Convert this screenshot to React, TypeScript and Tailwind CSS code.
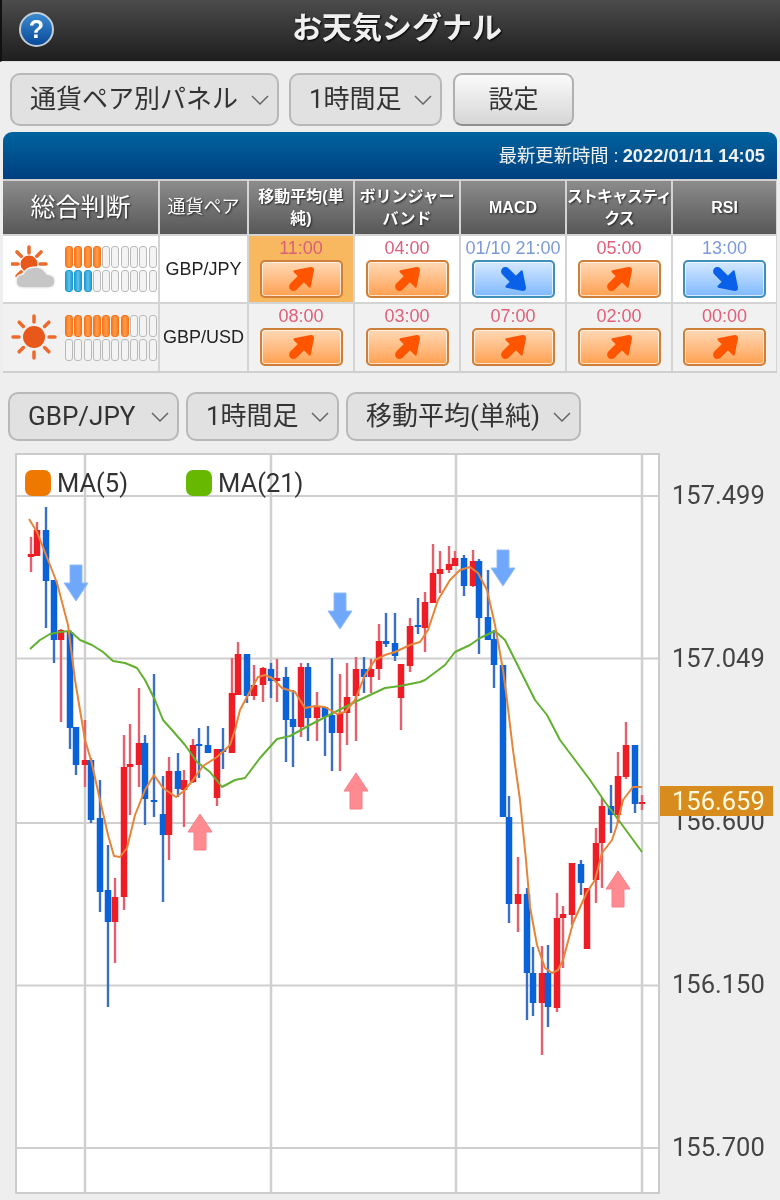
const candles: [number, number, number, number, number, "r" | "b"][] = [
  [31, 537, 572, 554, 557, "r"], [37, 522, 556, 530, 556, "r"], [46, 507, 628, 530, 581, "b"],
  [54, 580, 663, 580, 640, "b"], [61, 629, 722, 630, 640, "r"], [70, 630, 749, 632, 728, "b"],
  [76, 727, 775, 727, 765, "b"], [85, 720, 787, 760, 765, "r"], [91, 758, 823, 760, 820, "b"],
  [100, 780, 912, 818, 892, "b"], [108, 845, 1007, 890, 922, "b"], [115, 878, 963, 897, 922, "r"],
  [124, 735, 910, 767, 897, "r"], [130, 724, 815, 764, 767, "r"], [139, 688, 787, 743, 765, "r"],
  [145, 735, 825, 743, 799, "b"], [154, 674, 817, 800, 802, "b"], [163, 776, 902, 814, 835, "b"],
  [169, 757, 860, 771, 835, "r"], [178, 753, 797, 771, 789, "b"], [184, 770, 827, 780, 790, "r"],
  [193, 739, 783, 745, 782, "r"], [199, 728, 778, 744, 746, "b"], [208, 726, 753, 745, 753, "b"],
  [217, 749, 806, 749, 798, "r"], [223, 728, 769, 749, 752, "b"], [232, 658, 753, 693, 753, "r"],
  [238, 642, 695, 654, 695, "r"], [247, 654, 703, 654, 696, "b"], [254, 665, 700, 685, 696, "r"],
  [263, 667, 702, 668, 685, "r"], [271, 663, 698, 669, 681, "b"], [277, 659, 702, 678, 681, "r"],
  [286, 667, 762, 677, 720, "b"], [293, 690, 767, 719, 727, "b"], [301, 663, 737, 667, 727, "r"],
  [308, 663, 741, 667, 718, "b"], [317, 692, 741, 707, 718, "r"], [325, 707, 756, 707, 717, "b"],
  [332, 658, 771, 715, 733, "b"], [340, 674, 771, 713, 733, "r"], [347, 663, 745, 697, 713, "r"],
  [356, 657, 741, 669, 696, "r"], [364, 657, 693, 669, 677, "b"], [371, 659, 693, 669, 677, "r"],
  [379, 624, 680, 641, 669, "r"], [386, 613, 647, 641, 644, "b"], [395, 613, 661, 643, 656, "b"],
  [401, 664, 730, 664, 698, "r"], [410, 618, 672, 626, 666, "r"], [418, 598, 634, 625, 627, "b"],
  [425, 592, 652, 602, 628, "r"], [433, 544, 603, 573, 603, "r"], [440, 551, 593, 569, 574, "r"],
  [449, 546, 573, 564, 570, "r"], [455, 551, 566, 558, 566, "r"], [464, 555, 596, 558, 586, "b"],
  [473, 550, 587, 561, 586, "r"], [479, 559, 654, 561, 618, "b"], [488, 570, 640, 617, 640, "b"],
  [494, 630, 688, 639, 665, "b"], [503, 665, 817, 665, 817, "b"], [509, 796, 923, 817, 904, "b"],
  [518, 857, 932, 894, 904, "r"], [527, 888, 1020, 894, 973, "b"], [533, 947, 1016, 973, 1003, "b"],
  [542, 946, 1055, 973, 1003, "r"], [548, 945, 1027, 973, 1007, "b"], [557, 893, 1012, 918, 1008, "r"],
  [563, 906, 968, 914, 918, "r"], [572, 863, 925, 863, 915, "r"], [581, 860, 895, 864, 883, "b"],
  [587, 888, 949, 888, 949, "r"], [596, 828, 903, 843, 880, "r"], [602, 798, 888, 806, 843, "r"],
  [611, 785, 833, 806, 815, "b"], [618, 752, 823, 776, 815, "r"], [626, 722, 779, 745, 777, "r"],
  [635, 745, 813, 745, 804, "b"], [642, 795, 810, 802, 804, "r"],
];

const ma5 =
  "29,519 37,532 46,555 57,583 68,625 75,680 85,740 91,760 100,800 108,835 114,856 120,857 127,848 135,815 145,790 154,775 163,788 176,797 184,791 193,780 203,766 217,757 230,745 235,730 240,710 248,695 258,677 265,675 272,678 282,688 295,692 305,708 315,706 325,707 337,714 345,712 355,700 365,675 375,660 385,655 395,652 410,645 420,642 428,630 438,600 450,580 460,570 470,567 478,573 487,590 495,625 503,670 507,700 513,750 520,800 526,860 530,907 537,945 545,968 552,973 558,970 563,960 573,923 587,892 595,880 602,853 612,840 617,825 623,800 633,787 642,787";
const ma21 =
  "30,649 40,640 50,634 60,632 70,631 80,640 92,645 103,652 113,661 125,663 137,668 145,680 155,700 163,720 172,730 185,745 197,762 210,772 222,787 235,780 245,778 260,758 277,739 290,736 310,725 335,712 355,702 385,688 400,686 420,682 425,680 445,665 455,652 470,645 480,638 495,631 505,640 520,670 535,700 547,715 560,740 575,760 590,780 605,802 620,822 642,852";

const downArrows: [number, number][] = [[76, 565], [340, 593], [503, 550]];
const upArrows: [number, number][] = [[200, 814], [356, 773], [618, 871]];

function SignalArrow({ dir }: { dir: "up" | "down" }) {
  const color = dir === "up" ? "#ff5500" : "#0a60e8";
  return (
    <svg width="26" height="26" viewBox="0 0 24 24" className={dir === "down" ? "-scale-y-100" : ""}>
      <path d="M5 19 L14 10" stroke={color} strokeWidth="8" strokeLinecap="round" fill="none" />
      <path d="M6 5 L21 2 Q23 2 23 4 L20 19 Z" fill={color} stroke={color} strokeWidth="2" strokeLinejoin="round" />
    </svg>
  );
}

function Rays({ cx, cy, r1, r2, color }: { cx: number; cy: number; r1: number; r2: number; color: string }) {
  return (
    <>
      {[0, 45, 90, 135, 180, 225, 270, 315].map((a) => {
        const t = (a * Math.PI) / 180;
        return (
          <line
            key={a}
            x1={cx + r1 * Math.cos(t)}
            y1={cy + r1 * Math.sin(t)}
            x2={cx + r2 * Math.cos(t)}
            y2={cy + r2 * Math.sin(t)}
            stroke={color}
            strokeWidth="3.5"
            strokeLinecap="round"
          />
        );
      })}
    </>
  );
}

function CloudySun() {
  return (
    <svg width="50" height="50" viewBox="0 0 50 50">
      <Rays cx={18} cy={20} r1={11} r2={17} color="#ec6a2c" />
      <circle cx="18" cy="20" r="8.5" fill="#e8581a" />
      <path
        d="M12 44 Q5 44 5 37 Q5 31 12 30 Q15 23 25 23 Q32 23 36 30 Q44 31 44 37 Q44 44 37 44 Z"
        fill="#c6c6c6"
        stroke="#f4f4f4"
        strokeWidth="1.5"
      />
    </svg>
  );
}

function Sun() {
  return (
    <svg width="50" height="50" viewBox="0 0 50 50">
      <Rays cx={23} cy={24} r1={15} r2={21} color="#ec6a2c" />
      <circle cx="23" cy="24" r="11" fill="#e8581a" />
    </svg>
  );
}

function Meter({ on, color }: { on: number; color: "orange" | "blue" | "none" }) {
  return (
    <div className="flex gap-[1.3px]">
      {[0, 1, 2, 3, 4, 5, 6, 7, 8, 9].map((i) => (
        <div
          key={i}
          className={`h-[22px] w-[8px] rounded-[3px] border-[1.5px] ${
            i < on
              ? color === "orange"
                ? "border-[#f8741a] bg-gradient-to-r from-[#ff7a14] via-[#ff9c4c] to-[#ff7a14]"
                : "border-[#1a9ad0] bg-gradient-to-r from-[#18a0d8] via-[#60c0e6] to-[#18a0d8]"
              : "border-[#bababa] bg-[#f3f3f3]"
          }`}
        />
      ))}
    </div>
  );
}

function Signal({ time, dir, active }: { time: string; dir: "up" | "down"; active?: boolean }) {
  return (
    <div className={`flex h-full flex-col items-center ${active ? "bg-[#f8b860]" : ""}`}>
      <div className={`text-[18px] leading-[24px] ${dir === "up" ? (active ? "text-[#d8607a]" : "text-[#e0607a]") : "text-[#7c9ada]"}`}>
        {time}
      </div>
      <div
        className={`flex h-[38px] w-[83px] items-center justify-center rounded-[5px] border-2 shadow-[inset_0_0_0_1px_#ffffffb0] bg-gradient-to-b ${
          dir === "up"
            ? "border-[#cf7f38] from-[#ffd8b4] to-[#ffa04e]"
            : "border-[#3f8fb8] from-[#d4e8ff] to-[#7fb9ff]"
        }`}
      >
        <SignalArrow dir={dir} />
      </div>
    </div>
  );
}

function Select({ label, width, height }: { label: string; width: string; height: string }) {
  return (
    <div
      className={`flex items-center justify-between rounded-[10px] border-2 border-[#b8b8b8] bg-[#e1e1e1] pl-[18px] pr-[8px] font-['Roboto','Noto_Sans_CJK_JP',sans-serif] text-[26px] text-[#333] ${width} ${height}`}
    >
      <span className="whitespace-nowrap">{label}</span>
      <svg width="18" height="10" viewBox="0 0 18 10" fill="none" stroke="#666" strokeWidth="1.5">
        <path d="M1 1 L9 9 L17 1" />
      </svg>
    </div>
  );
}

const headClass =
  "flex items-center justify-center bg-gradient-to-b from-[#8c8c8c] to-[#585858] text-center text-white [text-shadow:1px_1px_2px_#222]";

const heads = [["移動平均(単", "純)"], ["ボリンジャー", "バンド"], ["MACD"], ["ストキャスティ", "クス"], ["RSI"]];

export default function App() {
  return (
    <div className="min-h-[1200px] w-[780px] bg-[#eeeeee] font-['Liberation_Sans','Noto_Sans_CJK_JP',sans-serif] blur-[0.5px]">
      <header className="flex h-[62px] items-center border-b border-[#ddd] border-l-2 border-l-[#111] bg-gradient-to-b from-[#4c4c4c] to-[#1e1e1e] pl-[17px]">
        <div className="-mt-[3px] flex h-[35px] w-[35px] items-center justify-center rounded-full border-2 border-[#c4ccd6] bg-gradient-to-b from-[#3a8ad0] to-[#0a4a9a] text-[25px] font-bold leading-none text-white">
          ?
        </div>
        <h1 className="-mt-[7px] ml-[238px] text-[30px] font-bold text-[#f0f0f0] [text-shadow:1px_1px_2px_#000]">お天気シグナル</h1>
      </header>

      <div className="flex gap-[10px] pl-[10px] pt-[11px]">
        <Select label="通貨ペア別パネル" width="w-[269px]" height="h-[53px]" />
        <Select label="1時間足" width="w-[153px]" height="h-[53px]" />
        <button className="ml-[1px] h-[53px] w-[121px] rounded-[9px] border-2 border-[#b0b0b0] border-b-[#8f8f8f] bg-gradient-to-b from-[#fafafa] to-[#d6d6d6] text-[25px] text-[#333]">
          設定
        </button>
      </div>

      <section className="mx-[3px] mt-[6px]">
        <div className="flex h-[47px] items-center justify-end rounded-t-[9px] bg-gradient-to-b from-[#00649f] to-[#003f7e] pr-[12px] text-[18.3px] text-[#f0f0f0]">
          <span>最新更新時間 : </span>
          <span className="ml-[4px] font-bold">2022/01/11 14:05</span>
        </div>
        <div className="grid grid-cols-[155px_87px_104px_104px_104px_104px_103px] grid-rows-[53px_66px_67px] gap-[2px] border-y-2 border-[#cfcfcf] bg-[#d4d4d4]">
          <div className={`${headClass} text-[25px]`}>総合判断</div>
          <div className={`${headClass} text-[18px]`}>通貨ペア</div>
          {heads.map((lines) => (
            <div key={lines[0]} className={`${headClass} text-[16px] font-bold leading-[22px]`}>
              <div className={lines[0] === "ストキャスティ" ? "tracking-[-1px]" : ""}>
                {lines.map((l) => (
                  <div key={l} className="whitespace-nowrap">{l}</div>
                ))}
              </div>
            </div>
          ))}

          <div className="flex items-center gap-[4px] bg-white pl-[8px]">
            <CloudySun />
            <div className="flex flex-col gap-[2px]">
              <Meter on={4} color="orange" />
              <Meter on={3} color="blue" />
            </div>
          </div>
          <div className="flex items-center justify-center bg-white text-[18px] text-[#222]">GBP/JPY</div>
          <Signal time="11:00" dir="up" active />
          <div className="bg-white"><Signal time="04:00" dir="up" /></div>
          <div className="bg-white"><Signal time="01/10 21:00" dir="down" /></div>
          <div className="bg-white"><Signal time="05:00" dir="up" /></div>
          <div className="bg-white"><Signal time="13:00" dir="down" /></div>

          <div className="flex items-center gap-[4px] bg-[#f1f1f1] pl-[8px]">
            <Sun />
            <div className="flex flex-col gap-[2px]">
              <Meter on={7} color="orange" />
              <Meter on={0} color="none" />
            </div>
          </div>
          <div className="flex items-center justify-center bg-[#f1f1f1] text-[18px] text-[#222]">GBP/USD</div>
          {["08:00", "03:00", "07:00", "02:00", "00:00"].map((t) => (
            <div key={t} className="bg-[#f1f1f1]"><Signal time={t} dir="up" /></div>
          ))}
        </div>
      </section>

      <div className="ml-[8px] mt-[19px] flex gap-[7px]">
        <Select label="GBP/JPY" width="w-[171px]" height="h-[49px]" />
        <Select label="1時間足" width="w-[153px]" height="h-[49px]" />
        <Select label="移動平均(単純)" width="w-[235px]" height="h-[49px]" />
      </div>

      <div className="ml-[15px] mt-[12px] flex">
        <div className="relative h-[741px] w-[645px] border-2 border-[#cccccc] bg-white">
          <svg width="641" height="737" viewBox="17 455 641 737" className="block">
            {[496, 658.5, 823, 985.5, 1148].map((y) => (
              <line key={y} x1="17" x2="658" y1={y} y2={y} stroke="#cfcfcf" strokeWidth="2" />
            ))}
            {[85, 271, 456, 642].map((x) => (
              <line key={x} y1="455" y2="1192" x1={x} x2={x} stroke="#cfcfcf" strokeWidth="2.5" />
            ))}
            {candles.map(([x, wt, wb, bt, bb, c]) => (
              <g key={x}>
                <line x1={x} x2={x} y1={wt} y2={wb} stroke={c === "r" ? "#e4606c" : "#3a6fc4"} strokeWidth="2.4" />
                <rect x={x - 3.25} y={bt} width="6.5" height={bb - bt} fill={c === "r" ? "#ee1c25" : "#0a62d8"} />
              </g>
            ))}
            <polyline points={ma21} fill="none" stroke="#62b030" strokeWidth="2" strokeLinejoin="round" />
            <polyline points={ma5} fill="none" stroke="#e6853a" strokeWidth="2" strokeLinejoin="round" />
            {downArrows.map(([x, y]) => (
              <polygon
                key={x}
                points={`${x - 6},${y} ${x + 6},${y} ${x + 6},${y + 18} ${x + 12},${y + 18} ${x},${y + 36} ${x - 12},${y + 18} ${x - 6},${y + 18}`}
                fill="#6fa8fb"
                stroke="#8fbcfb"
              />
            ))}
            {upArrows.map(([x, y]) => (
              <polygon
                key={x}
                points={`${x - 6},${y + 36} ${x + 6},${y + 36} ${x + 6},${y + 18} ${x + 12},${y + 18} ${x},${y} ${x - 12},${y + 18} ${x - 6},${y + 18}`}
                fill="#ff8a90"
                stroke="#f78088"
              />
            ))}
          </svg>
          <div className="absolute left-[8px] top-[15px] flex items-center font-['Roboto',sans-serif] text-[25.5px] leading-[26px] text-[#333]">
            <span className="h-[26px] w-[26px] rounded-[7px] bg-[#ee7800]" />
            <span className="ml-[6px]">MA(5)</span>
            <span className="ml-[58px] h-[26px] w-[26px] rounded-[7px] bg-[#66b800]" />
            <span className="ml-[6px]">MA(21)</span>
          </div>
        </div>

        <div className="relative flex-1 pl-[12px] pt-[27px] font-['Roboto',sans-serif] text-[25.5px] leading-[30px] text-[#444]">
          <div className="flex flex-col gap-[132.9px]">
            <div>157.499</div>
            <div>157.049</div>
            <div>156.600</div>
            <div>156.150</div>
            <div>155.700</div>
          </div>
          <div className="absolute left-0 top-[333px] flex h-[30px] w-[113px] items-center pl-[12px] bg-[#d98c1e] text-[#fffbe0]">
            156.659
          </div>
        </div>
      </div>
    </div>
  );
}
